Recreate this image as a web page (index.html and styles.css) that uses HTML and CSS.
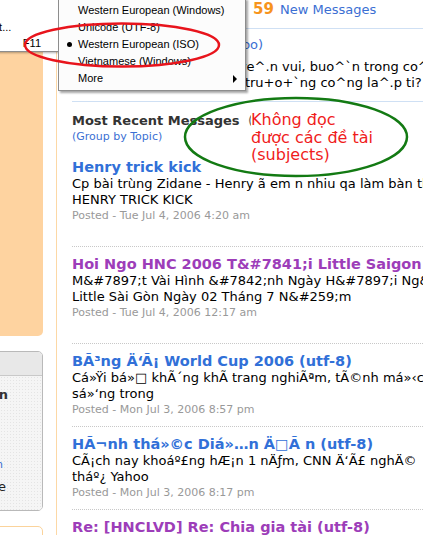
FILE: index.html
```html
<!DOCTYPE html>
<html lang="vi">
<head>
    <meta charset="UTF-8" />
    <meta name="viewport" content="width=device-width, initial-scale=1" />
    <title>HNCLVD - Messages</title>
    <link rel="stylesheet" href="styles.css">
</head>
<body>

    <div class="page">

        <aside class="side">
            <div class="side-promo"></div>

            <div class="side-box">
                <div class="side-box-head">Thông tin nhóm</div>
                <div class="side-box-body">
                    <p class="side-strong">Thành viên</p>
                    <p class="side-link"><a href="#">Tham gia nhóm</a></p>
                    <p class="side-note">Private</p>
                </div>
            </div>

            <div class="side-box side-box-orange"></div>
        </aside>

        <main class="content">

            <div class="summary">
                <span class="count">59</span> <a href="#">New Messages</a>
            </div>

            <div class="about">
                <p class="about-site"><a href="#">(Trang web nhóm trên Yahoo)</a></p>
                <p>Ke^? nhu+~ng ca^u chuye^.n vui, buo^`n trong co^ng vie^.c ha`ng nga`y</p>
                <p>ddo+`i so^'ng va`o mo^i tru+o+`ng co^ng la^.p ti? le^. cao</p>
            </div>

            <h2 class="recent">Most Recent Messages <span class="range">(1 - 15 of 2358)</span></h2>
            <a class="group-link" href="#">(Group by Topic)</a>

            <div class="msgs">
                <div class="msg msg-spaced">
                    <a class="msg-title" href="#">Henry trick kick</a>
                    <p>Cp bài trùng Zidane - Henry ã em n nhiu qa làm bàn thng cho i nhà</p>
                    <p>HENRY TRICK KICK</p>
                    <p class="posted">Posted - Tue Jul 4, 2006 4:20 am</p>
                </div>

                <div class="msg msg-spaced">
                    <a class="msg-title visited" href="#">Hoi Ngo HNC 2006 T&amp;#7841;i Little Saigon</a>
                    <p>M&amp;#7897;t Vài Hình &amp;#7842;nh Ngày H&amp;#7897;i Ng&amp;#7897; HNC 2006 T&amp;#7841;i</p>
                    <p>Little Sài Gòn Ngày 02 Tháng 7 N&amp;#259;m</p>
                    <p class="posted">Posted - Tue Jul 4, 2006 12:17 am</p>
                </div>

                <div class="msg">
                    <a class="msg-title" href="#">BÃ³ng Ä‘Ã¡ World Cup 2006 (utf-8)</a>
                    <p>Cá»Ÿi bá»□ khÃ´ng khÃ­ trang nghiÃªm, tÃ©nh má»‹ch cá»§a</p>
                    <p>sá»‘ng trong</p>
                    <p class="posted">Posted - Mon Jul 3, 2006 8:57 pm</p>
                </div>

                <div class="msg">
                    <a class="msg-title" href="#">HÃ¬nh thá»©c Diá»…n Ä□Ã&nbsp;n (utf-8)</a>
                    <p>CÃ¡ch nay khoáº£ng hÆ¡n 1 nÄƒm, CNN Ä‘Ã£ nghÄ©</p>
                    <p>tháº¿ Yahoo</p>
                    <p class="posted">Posted - Mon Jul 3, 2006 8:17 pm</p>
                </div>

                <div class="msg">
                    <a class="msg-title visited" href="#">Re: [HNCLVD] Re: Chia gia tài (utf-8)</a>
                    <p>Chia gia tài</p>
                </div>
            </div>

        </main>
    </div>

    <!-- View menu with the Encoding submenu open -->
    <div class="menu menu-view">
        <div class="menu-row"><span>Source</span><span></span></div>
        <div class="menu-row"><span>Privacy Report...</span><span></span></div>
        <div class="menu-row"><span>Full Screen</span><span>F11</span></div>
    </div>

    <div class="menu menu-encoding">
        <div class="menu-item">Western European (Windows)</div>
        <div class="menu-item">Unicode (UTF-8)</div>
        <div class="menu-item checked">Western European (ISO)</div>
        <div class="menu-item">Vietnamese (Windows)</div>
        <div class="menu-item more">More</div>
    </div>

    <div class="note">Không đọc<br>được các đề tài<br>(subjects)</div>

    <svg class="marks" width="423" height="535" viewBox="0 0 423 535">
        <ellipse cx="122" cy="45" rx="97" ry="21.5" fill="none" stroke="#e8141c" stroke-width="2.5" />
        <ellipse cx="296" cy="137" rx="111" ry="39" fill="none" stroke="#137a13" stroke-width="2.5" />
    </svg>

</body>
</html>
```

FILE: styles.css
```css
html, body {
    overflow: hidden;
}

body {
    margin: 0;
    background: #fff;
    color: #000;
    font-family: "DejaVu Sans", Verdana, sans-serif;
}

a {
    text-decoration: none;
}

p {
    margin: 0;
}

.page {
    display: flex;
    gap: 13px;
}

/* Left column: only its right edge is in view */
.side {
    width: 43px;
    flex: none;
    display: flex;
    flex-direction: column;
    align-items: flex-end;
    overflow: hidden;
}

.side-promo {
    width: 200px;
    height: 336px;
    background: #fed3a0;
    border-radius: 0 0 5px 0;
}

.side-box {
    width: 200px;
    margin-top: 15px;
    border: 1px solid #b9b9b9;
    border-radius: 0 5px 5px 0;
    box-sizing: border-box;
    overflow: hidden;
}

.side-box-head {
    height: 23px;
    line-height: 23px;
    background: #e8e8e8;
    border-bottom: 1px solid #c9c9c9;
    font-size: 12px;
    font-weight: bold;
    color: #333;
    text-align: right;
    padding-right: 60px;
}

.side-box-body {
    height: 134px;
    padding: 11px 34px 0 0;
    box-sizing: border-box;
    text-align: right;
    font-size: 13px;
    line-height: 16px;
    color: #222;
    background-color: #f5f5f5;
    background-image: radial-gradient(#e4e4e4 0.6px, transparent 0.8px);
    background-size: 3px 3px;
}

.side-strong {
    font-weight: bold;
    color: #333;
}

.side-link {
    margin-top: 54px;
    margin-right: 5px;
    font-size: 11px;
}

    .side-link a {
        color: #3b6fd3;
    }

.side-note {
    margin-top: 6px;
    margin-right: 2px;
}

.side-box-orange {
    height: 60px;
    border-color: #fbd39b;
    border-radius: 0 5px 0 0;
}

/* Main column */
.content {
    flex: 1;
    min-width: 0;
    min-height: 560px;
    border-left: 1px solid #fcd8a6;
    padding-left: 15px;
    overflow: hidden;
    white-space: nowrap;
}

.summary {
    height: 28px;
    line-height: 18px;
    padding-left: 181px;
    border-bottom: 1px solid #cfe0f4;
    font-size: 13px;
}

    .summary a {
        color: #3b6fd3;
    }

.count {
    font-size: 15px;
    font-weight: bold;
    color: #f7941d;
    margin-right: 2px;
}

.about {
    padding: 8px 0 10px;
    border-bottom: 1px solid #cfe0f4;
    font-size: 13px;
    line-height: 16px;
}

    .about a {
        color: #3b6fd3;
    }

.about-site {
    margin-bottom: 6px;
}

.recent {
    margin: 11px 0 0;
    font-size: 13px;
    line-height: 16px;
    color: #333;
}

.range {
    font-weight: normal;
    color: #666;
    margin-left: 4px;
}

.group-link {
    display: block;
    font-size: 11px;
    line-height: 16px;
    color: #3b6fd3;
}

.msgs {
    margin-top: 13px;
}

.msg {
    padding: 8px 0;
    border-top: 1px dotted #c8c8c8;
    font-size: 13px;
    line-height: 16px;
}

    .msg:first-child {
        border-top: none;
        padding-top: 0;
    }

.msg-spaced {
    padding-bottom: 22px;
}

.msg-title {
    display: block;
    font-size: 14.5px;
    font-weight: bold;
    line-height: 18px;
    color: #3170d8;
}

    .msg-title.visited {
        color: #9d3db9;
    }

.posted {
    font-size: 11px;
    color: #999;
}

/* Browser menus */
.menu {
    position: absolute;
    box-sizing: border-box;
    border: 1px solid #8d8d8d;
    font-family: "Liberation Sans", Arial, sans-serif;
    font-size: 11px;
    color: #000;
    white-space: nowrap;
}

.menu-view {
    left: -85px;
    top: -1px;
    width: 145px;
    padding: 3px 18px 0 14px;
    background: #fff;
    box-shadow: 1px 1px 2px rgba(0, 0, 0, 0.3);
}

.menu-row {
    display: flex;
    justify-content: space-between;
    height: 16px;
    line-height: 16px;
}

.menu-encoding {
    left: 58px;
    top: -2px;
    width: 188px;
    padding: 3px 0;
    background: #fcfcfc;
    box-shadow: 2px 2px 2px rgba(0, 0, 0, 0.35);
}

.menu-item {
    position: relative;
    height: 17px;
    line-height: 17px;
    padding-left: 19px;
}

    .menu-item.checked::before {
        content: "";
        position: absolute;
        left: 8px;
        top: 6px;
        width: 5px;
        height: 5px;
        border-radius: 50%;
        background: #000;
    }

    .menu-item.more::after {
        content: "";
        position: absolute;
        right: 8px;
        top: 5px;
        border-left: 4px solid #000;
        border-top: 4px solid transparent;
        border-bottom: 4px solid transparent;
    }

/* Hand-drawn annotation */
.note {
    position: absolute;
    left: 251px;
    top: 111px;
    background: #fff;
    color: #f01c1c;
    font-size: 16px;
    line-height: 17.5px;
}

.marks {
    position: absolute;
    left: 0;
    top: 0;
    pointer-events: none;
}
```
